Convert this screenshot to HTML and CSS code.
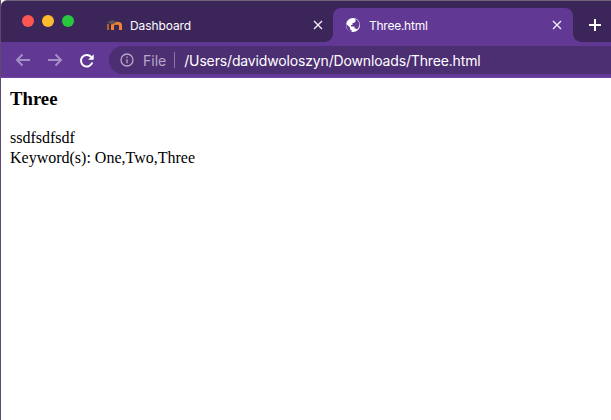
FILE: index.html
```html
<!DOCTYPE html>
<html lang="en">
<head>
<meta charset="utf-8">
<title>Three.html</title>
<link rel="stylesheet" href="styles.css">
</head>
<body>
<div class="window">
  <header class="tabstrip">
    <div class="lights">
      <span class="light red"></span>
      <span class="light yellow"></span>
      <span class="light green"></span>
    </div>
    <div class="tab inactive">
      <svg class="favicon" width="18" height="14" viewBox="0 0 18 14">
        <path d="M3 12V6" stroke="#b0622f" stroke-width="2" fill="none"/>
        <path d="M7.500 12V7c0-2.500 8-2.500 8 0V12" stroke="#ee8430" stroke-width="3" fill="none"/>
        <path d="M2 4.500 7 2l5 2L7 6.500z" fill="#5a5258"/>
      </svg>
      <span class="tab-title">Dashboard</span>
      <svg class="close" width="10" height="10" viewBox="0 0 10 10"><path d="M1 1l8 8M9 1l-8 8"/></svg>
    </div>
    <div class="tab active">
      <svg class="favicon globe" width="16" height="16" viewBox="0 0 16 16">
        <circle cx="8" cy="8" r="7" fill="#fff"/>
        <path d="M1.300 7 5 10.500v1c0 .8.700 1.500 1.500 1.500v1.900C3.800 14.500 1.500 11.700 1.300 8.500z" fill="#613894"/>
        <path d="M10.500 2c2 .8 3.500 2.700 4 5-.3 2.500-1.200 4.300-2.500 5.500-.2-.6-.8-1-1.500-1h-1V9.500H6V8h1.500V6H9l1.500-1.500z" fill="#613894"/>
      </svg>
      <span class="tab-title">Three.html</span>
      <svg class="close" width="10" height="10" viewBox="0 0 10 10"><path d="M1 1l8 8M9 1l-8 8"/></svg>
    </div>
    <svg class="plus" width="12" height="12" viewBox="0 0 12 12"><path d="M6 0v12M0 6h12"/></svg>
  </header>
  <nav class="toolbar">
    <svg class="nav-icon dim" width="16" height="14" viewBox="0 0 16 14"><path d="M15 7H2M7.500 1.500 2 7l5.500 5.500"/></svg>
    <svg class="nav-icon dim" width="16" height="14" viewBox="0 0 16 14"><path d="M1 7h13M8.500 1.500 14 7l-5.500 5.500"/></svg>
    <svg class="nav-icon" width="16" height="16" viewBox="0 0 16 16"><path d="M13.300 9.500A5.800 5.800 0 1 1 12 3.700L14 5.500"/><path class="fill" d="M14.700 1.200v5.600H9.100z"/></svg>
    <div class="omnibox">
      <svg class="info" width="14" height="14" viewBox="0 0 14 14">
        <circle cx="7" cy="7" r="6" />
        <path d="M7 6.200v4M7 3.500v1.400"/>
      </svg>
      <span class="scheme">File</span>
      <span class="sep"></span>
      <span class="url">/Users/davidwoloszyn/Downloads/Three.html</span>
    </div>
  </nav>
  <main class="page">
    <h3 class="heading">Three</h3>
    <p class="body-text">ssdfsdfsdf<br>Keyword(s): One,Two,Three</p>
  </main>
</div>
</body>
</html>
```

FILE: styles.css
```css
* { box-sizing: border-box; }
html, body { margin: 0; height: 100%; }
body { overflow: hidden; background: #fff; }

.window {
  height: 420px;
  display: flex;
  flex-direction: column;
  border-left: 1px solid #5c4a70;
}

.tabstrip {
  height: 42px;
  flex: none;
  display: flex;
  align-items: flex-end;
  background: #3b2559;
  border-top: 1px solid #6e6378;
  border-top-left-radius: 6px;
  font-family: Inter, "Noto Sans", sans-serif;
  font-size: 12px;
  color: #fff;
}

.lights {
  width: 92px;
  height: 40px;
  flex: none;
  display: flex;
  gap: 8px;
  padding: 13px 0 0 21px;
}
.light { width: 12px; height: 12px; border-radius: 50%; }
.red { background: #fc5753; }
.yellow { background: #fdbc2e; }
.green { background: #28c83f; }

.tab {
  position: relative;
  width: 240px;
  height: 34px;
  flex: none;
  display: flex;
  align-items: center;
  border-radius: 8px 8px 0 0;
}
.tab.active { background: #613894; padding: 0 11px 0 12px; }
.tab.active::before,
.tab.active::after {
  content: "";
  position: absolute;
  bottom: 0;
  width: 8px;
  height: 8px;
}
.tab.active::before {
  left: -8px;
  background: radial-gradient(circle at 0 0, transparent 7.500px, #613894 8px);
}
.tab.active::after {
  right: -8px;
  background: radial-gradient(circle at 100% 0, transparent 7.500px, #613894 8px);
}
.tab.active .tab-title { letter-spacing: -.25px; }
.tab.inactive { padding: 0 10px 0 12px; }
.favicon { flex: none; margin-right: 7px; }
.globe { margin-right: 8px; }
.tab-title { flex: 1; letter-spacing: -.1px; white-space: nowrap; }
.close { flex: none; fill: none; stroke: #f2edf7; stroke-width: 1.400; }

.plus {
  flex: none;
  margin: 0 0 11px 16px;
  fill: none;
  stroke: #fff;
  stroke-width: 2;
}

.toolbar {
  height: 36px;
  flex: none;
  display: flex;
  align-items: flex-start;
  gap: 16px;
  padding: 4px 0 0 14px;
  background: #613894;
  border-bottom: 1px solid #6f45a6;
  font-family: Inter, "Noto Sans", sans-serif;
  font-size: 14px;
}
.nav-icon {
  flex: none;
  margin-top: 7px;
  fill: none;
  stroke: #fff;
  stroke-width: 2;
}
.nav-icon.dim { stroke: #a48fc4; }
.nav-icon .fill { fill: #fff; stroke: none; }

.omnibox {
  flex: 1;
  height: 28px;
  margin-left: -2px;
  display: flex;
  align-items: center;
  padding-left: 11px;
  border-radius: 14px 0 0 14px;
  background: #4c2e73;
  color: #fff;
  white-space: nowrap;
}
.info { flex: none; fill: none; stroke: #b5a9c6; stroke-width: 1.300; }
.scheme { margin-left: 9px; color: #b5a9c6; }
.sep { width: 1px; height: 16px; margin: 0 9px 0 8px; background: #8a78a3; }
.url { letter-spacing: -.15px; }

.page {
  flex: 1;
  padding: 10px 9px;
  background: #fff;
  color: #000;
  font-family: "Liberation Serif", "Times New Roman", serif;
  font-size: 16px;
}
.heading { margin: 0 0 19px; font-size: 18.720px; font-weight: 700; line-height: 21px; }
.body-text { margin: 0; line-height: 20px; }
```
